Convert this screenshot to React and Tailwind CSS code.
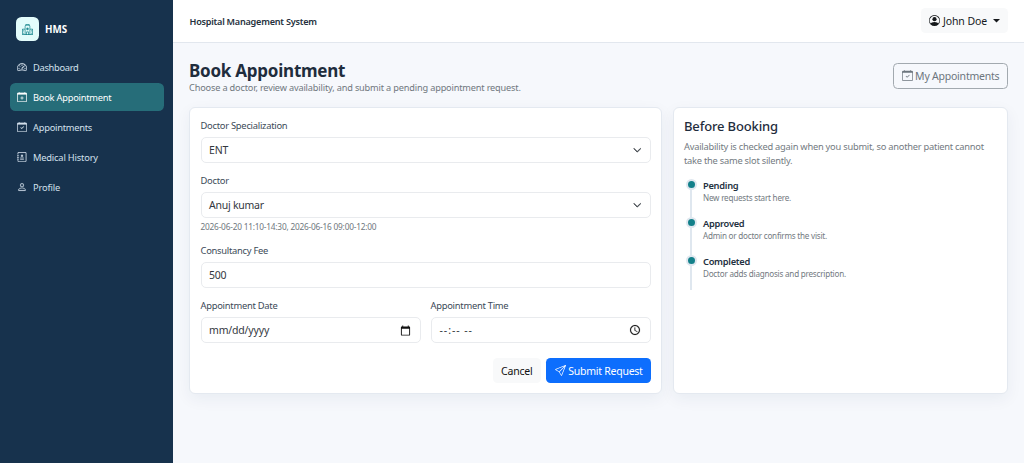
import React from "react";
import {
  BsHospital,
  BsSpeedometer2,
  BsCalendarPlus,
  BsCalendarCheck,
  BsJournalMedical,
  BsPerson,
  BsPersonCircle,
  BsSend,
  BsChevronDown,
} from "react-icons/bs";

const NAV = [
  { label: "Dashboard", icon: BsSpeedometer2, track: "tracking-[-0.3px]" },
  { label: "Book Appointment", icon: BsCalendarPlus, track: "tracking-[-0.24px]", active: true },
  { label: "Appointments", icon: BsCalendarCheck, track: "tracking-[-0.25px]" },
  { label: "Medical History", icon: BsJournalMedical, track: "tracking-[-0.18px]" },
  { label: "Profile", icon: BsPerson, track: "tracking-[-0.15px]" },
];

const STEPS = [
  { title: "Pending", text: "New requests start here." },
  { title: "Approved", text: "Admin or doctor confirms the visit." },
  { title: "Completed", text: "Doctor adds diagnosis and prescription." },
];

function Sidebar() {
  return (
    <aside className="flex w-[173px] shrink-0 flex-col bg-[#17324d] pr-[9px] pl-[9.5px] pt-[17px]">
      <div className="flex h-6 items-center gap-[6px] pl-[6px]">
        <div className="flex size-[23.5px] items-center justify-center rounded-[5.5px] bg-[#e3fcfb] text-[#13828a]">
          <BsHospital className="size-[11px]" />
        </div>
        <span className="pt-[2.5px] text-[9.8px] font-bold text-white">HMS</span>
      </div>
      <nav className="mt-[12px] flex flex-col gap-[2px]">
        {NAV.map(({ label, icon: Icon, track, active }) => (
          <a
            key={label}
            className={
              active
                ? "flex h-[28px] items-center gap-[6px] rounded-[5.5px] bg-[#266d79] px-[7.5px] pt-[0.5px] text-white"
                : "flex h-[28px] items-center gap-[6px] rounded-[5.5px] px-[7.5px] pt-[0.5px] text-[#d3e0ec]"
            }
          >
            <Icon className="size-[10px] shrink-0 stroke-[0.3]" />
            <span className={"pt-[1px] text-[9.3px] whitespace-nowrap " + track}>{label}</span>
          </a>
        ))}
      </nav>
    </aside>
  );
}

function Label({ children }) {
  return <div className="h-[18px] text-[9.4px] leading-[14px] tracking-[-0.27px] whitespace-nowrap text-[#3c4a58]">{children}</div>;
}

function Box({ children, icon }) {
  return (
    <div className="flex h-[26px] items-center justify-between rounded-[5px] border border-[#e9ebee] bg-white pr-[8px] pl-[7.5px] text-[10.5px] text-[#33383e]">
      {children}
      {icon}
    </div>
  );
}

function DateIcon() {
  return (
    <svg viewBox="0 0 24 24" className="mr-[1px] size-[11px]" fill="#111">
      <path d="M20 3h-1V1h-2v2H7V1H5v2H4c-1.1 0-2 .9-2 2v16c0 1.1.9 2 2 2h16c1.1 0 2-.9 2-2V5c0-1.1-.9-2-2-2zm0 18H4V8h16v13z" />
    </svg>
  );
}

function ClockIcon() {
  return (
    <svg viewBox="0 0 24 24" className="mr-[1px] size-[12px]" fill="#222" stroke="#222" strokeWidth="0.3">
      <path d="M11.99 2C6.47 2 2 6.48 2 12s4.47 10 9.99 10C17.52 22 22 17.52 22 12S17.52 2 11.99 2zM12 20c-4.42 0-8-3.58-8-8s3.58-8 8-8 8 3.58 8 8-3.58 8-8 8zm.5-13H11v6l5.25 3.15.75-1.23-4.5-2.67z" />
    </svg>
  );
}

function BookingForm() {
  const chevron = <BsChevronDown className="mr-[0.5px] size-[8.5px] stroke-[1.2] text-[#343a40]" />;
  return (
    <section className="flex h-[287.5px] w-[473px] shrink-0 flex-col rounded-[6px] border border-[#e4e9f0] bg-white px-[10.5px] pt-[11.5px] shadow-[0_5px_16px_rgba(23,50,77,0.06)]">
      <div className="h-[55px]">
        <Label>Doctor Specialization</Label>
        <Box icon={chevron}>
          <span className="pt-[1.5px] tracking-[-0.2px]">ENT</span>
        </Box>
      </div>
      <div className="h-[70px]">
        <Label>Doctor</Label>
        <Box icon={chevron}>
          <span className="pt-[1.5px] tracking-[-0.25px]">Anuj kumar</span>
        </Box>
        <div className="pt-[1.5px] text-[8.3px] leading-[13px] tracking-[-0.21px] text-[#70777e]">
          2026-06-20 11:10-14:30, 2026-06-16 09:00-12:00
        </div>
      </div>
      <div className="h-[55px]">
        <Label>Consultancy Fee</Label>
        <Box>
          <span className="pt-[1.5px] tracking-[-0.25px]">500</span>
        </Box>
      </div>
      <div className="grid h-[53px] grid-cols-2 gap-[10px]">
        <div>
          <Label>Appointment Date</Label>
          <Box icon={<DateIcon />}>
            <span className="pt-[1.5px] tracking-[-0.17px]">mm/dd/yyyy</span>
          </Box>
        </div>
        <div>
          <Label>Appointment Time</Label>
          <Box icon={<ClockIcon />}>
            <span className="pt-[1.5px] pl-[0.5px] tracking-[0.95px] whitespace-pre">--:-- --</span>
          </Box>
        </div>
      </div>
      <div className="mt-[5.5px] flex justify-end gap-[5px] text-[10.5px]">
        <button className="flex h-[25px] w-[48.5px] items-center justify-center rounded-[4.5px] bg-[#f8f9fa] pt-[3px] tracking-[-0.2px] text-[#111]">
          Cancel
        </button>
        <button className="flex h-[25px] w-[104.5px] items-center justify-center gap-[2.5px] rounded-[4.5px] bg-[#0d6efd] pl-px whitespace-nowrap text-white">
          <BsSend className="size-[11px]" />
          <span className="pt-[3px] tracking-[-0.26px]">Submit Request</span>
        </button>
      </div>
    </section>
  );
}

function BeforeBooking() {
  return (
    <section className="h-[287.5px] w-[335px] shrink-0 rounded-[6px] border border-[#e4e9f0] bg-white px-[10px] pt-[10px] shadow-[0_5px_16px_rgba(23,50,77,0.06)]">
      <h2 className="text-[13px] leading-[17px] font-medium tracking-[-0.15px] text-[#1f2d3d]">Before Booking</h2>
      <p className="mt-[5px] text-[9.3px] leading-[14.5px] tracking-[-0.24px] whitespace-nowrap text-[#737a81]">
        Availability is checked again when you submit, so another patient cannot
        <br />
        take the same slot silently.
      </p>
      <ol className="mt-[11px] ml-[6px] h-[110.5px] border-l-2 border-[#dfe7ef]">
        {STEPS.map((s) => (
          <li key={s.title} className="flex h-[38px] items-start">
            <span className="-mt-[0.5px] -ml-[6.5px] size-[11px] shrink-0 rounded-full border-[2.5px] border-[#dfe7ef] bg-[#13808a]" />
            <div className="-mt-[1px] ml-[6.5px] whitespace-nowrap">
              <div className="text-[9.3px] leading-[14px] font-semibold tracking-[-0.28px] text-[#24313f]">{s.title}</div>
              <div className="-mt-[0.5px] text-[8.1px] leading-[12px] tracking-[-0.22px] text-[#737a81]">{s.text}</div>
            </div>
          </li>
        ))}
      </ol>
    </section>
  );
}

export default function App() {
  return (
    <div className="flex h-[463px] w-[1024px] overflow-hidden bg-[#f6f8fc] font-['Noto_Sans','Open_Sans',sans-serif]">
      <Sidebar />
      <div className="flex min-w-0 flex-1 flex-col">
        <header className="flex h-[42.5px] shrink-0 items-center justify-between border-b border-[#e2e7ee] bg-white pr-[16px] pl-[16.5px]">
          <span className="pt-[2px] text-[9.1px] font-semibold tracking-[-0.23px] whitespace-nowrap text-[#25313d]">
            Hospital Management System
          </span>
          <button className="flex h-[25px] w-[87px] items-center justify-center rounded-[4.5px] bg-[#f8f9fa] text-[10.5px] whitespace-nowrap text-[#16191c]">
            <BsPersonCircle className="mr-[2.5px] size-[11px]" />
            <span className="pt-[3px] tracking-[-0.1px]">John Doe</span>
            <svg viewBox="0 0 8 4" className="ml-[5.5px] h-[3.5px] w-[7px]" fill="currentColor">
              <path d="M0 0h8L4 4z" />
            </svg>
          </button>
        </header>
        <main className="pr-[15.5px] pl-4 pt-[17px]">
          <div className="flex h-[47px] items-start justify-between">
            <div className="pt-[1px]">
              <h1 className="text-[17px] leading-[20px] font-bold tracking-[-0.24px] whitespace-nowrap text-[#1f2d3d]">
                Book Appointment
              </h1>
              <p className="text-[9.2px] leading-[13px] tracking-[-0.17px] whitespace-nowrap text-[#70777e]">
                Choose a doctor, review availability, and submit a pending appointment request.
              </p>
            </div>
            <button className="mt-[3px] mr-[0.5px] flex h-[26px] w-[115px] items-center justify-center gap-[2.5px] rounded-[4.5px] border border-[#a2a9af] text-[10.5px] whitespace-nowrap text-[#6c757d]">
              <BsCalendarCheck className="size-[11px]" />
              <span className="pt-[3px] tracking-[-0.22px]">My Appointments</span>
            </button>
          </div>
          <div className="flex gap-[11px]">
            <BookingForm />
            <BeforeBooking />
          </div>
        </main>
      </div>
    </div>
  );
}
